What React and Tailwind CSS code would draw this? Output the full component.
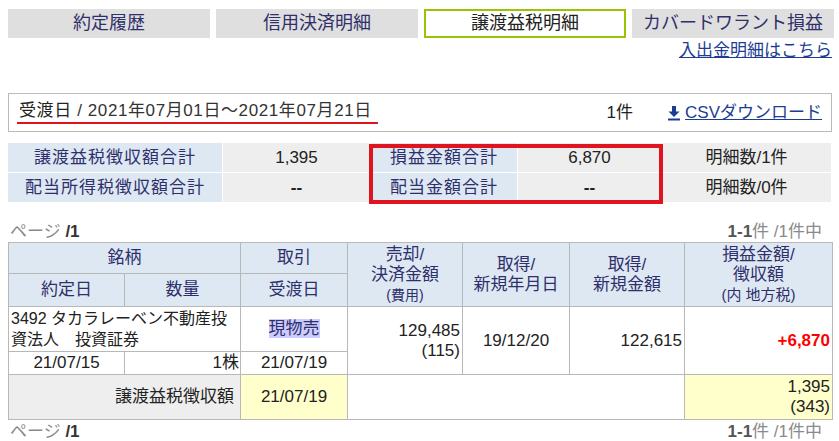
const tabs = [
  { label: '約定履歴' },
  { label: '信用決済明細' },
  { label: '譲渡益税明細', active: true },
  { label: 'カバードワラント損益' },
]

const jp = { fontFamily: '"Liberation Sans", "Noto Sans CJK JP", sans-serif' }

function DownloadIcon() {
  return (
    <svg width="14" height="16" viewBox="0 0 14 16" className="mr-[4px]">
      <rect x="5" y="1" width="4" height="6" fill="#1c3d94" />
      <path d="M1.5 6.5 H12.5 L7 12 Z" fill="#1c3d94" />
      <rect x="1" y="13.5" width="12" height="2" fill="#1c3d94" />
    </svg>
  )
}

function PageRow({ className }) {
  return (
    <div className={`flex justify-between items-center h-[18px] text-[17px] leading-[18px] ${className}`}>
      <span className="text-[#8a8a8a] pl-[2px]">
        ページ <b className="text-[#333] font-bold">/1</b>
      </span>
      <span className="text-[#8a8a8a] pr-[10px]">
        <b className="text-[#555] font-bold">1-1</b>件 /1件中
      </span>
    </div>
  )
}

export default function App() {
  const th = 'border border-[#b8b8b8] bg-[#dde8f3] text-[#2f2f6b] font-normal text-center text-[17px] leading-[20px] p-0'
  const tdBase = 'border border-[#b8b8b8] text-[#222] leading-[20px] p-0'
  const td = `${tdBase} text-[17px]`
  const cell = 'h-[29px] flex items-center justify-center'
  const label = `${cell} bg-[#dde8f3] text-[#2f2f6b] tracking-[1px]`

  return (
    <div className="w-[839px] h-[441px] overflow-hidden bg-white" style={jp}>
      <div className="flex gap-[6px] pl-[8px] pt-[9px] overflow-hidden">
        {tabs.map((t) => (
          <div
            key={t.label}
            className={`w-[202px] h-[29px] shrink-0 flex items-center justify-center text-[18px] ${
              t.active ? 'border-2 border-[#99c400] bg-white text-[#222]' : 'bg-[#dfdfdf] text-[#2f2f6b]'
            }`}
          >
            {t.label}
          </div>
        ))}
      </div>

      <div className="pl-[8px] w-[832px]">
        <div className="text-right h-[24px] pt-[3px] leading-[20px]">
          <a className="text-[17px] text-[#1c3d94] underline">入出金明細はこちら</a>
        </div>

        <div className="mt-[31px] h-[39px] border border-[#bbb] flex items-center justify-between text-[17px] text-[#333] pr-[9px]">
          <span className="ml-[8px] w-[361px] border-b-2 border-[#e0141e] pb-[1px] pl-[2px] leading-[20px] whitespace-nowrap tracking-[0.6px]">
            <span className="text-[#222]">受渡日</span> / 2021年07月01日～2021年07月21日
          </span>
          <div className="flex items-center">
            <span className="text-[#222]">1件</span>
            <a className="ml-[34px] flex items-center text-[#1c3d94] underline">
              <DownloadIcon />
              CSVダウンロード
            </a>
          </div>
        </div>

        <div className="relative mt-[11px]">
          <div className="grid grid-cols-[214px_147px_146px_143px_169px] gap-px text-[17px]">
            <div className={label}>譲渡益税徴収額合計</div>
            <div className={`${cell} bg-[#eeeeee] text-[#222]`}>1,395</div>
            <div className={label}>損益金額合計</div>
            <div className={`${cell} bg-[#eeeeee] text-[#222]`}>6,870</div>
            <div className={`${cell} bg-[#eeeeee] text-[#222]`}>明細数/1件</div>
            <div className={label}>配当所得税徴収額合計</div>
            <div className={`${cell} bg-[#eeeeee] text-[#222] font-bold`}>--</div>
            <div className={label}>配当金額合計</div>
            <div className={`${cell} bg-[#eeeeee] text-[#222] font-bold`}>--</div>
            <div className={`${cell} bg-[#eeeeee] text-[#222]`}>明細数/0件</div>
          </div>
          <div className="absolute left-[361px] top-[1px] w-[294px] h-[60px] border-[4px] border-[#e0141e] pointer-events-none" />
        </div>

        <PageRow className="mt-[21px]" />

        <table className="mt-[1px] w-[824px] table-fixed border-collapse">
          <colgroup>
            <col className="w-[116px]" />
            <col className="w-[116px]" />
            <col className="w-[107px]" />
            <col className="w-[115px]" />
            <col className="w-[107px]" />
            <col className="w-[115px]" />
            <col className="w-[148px]" />
          </colgroup>
          <tbody>
            <tr className="h-[31px]">
              <th colSpan={2} className={th}>銘柄</th>
              <th className={th}>取引</th>
              <th rowSpan={2} className={th}>
                売却/<br />決済金額<br />
                <span className="text-[14px] leading-[14px]">(費用)</span>
              </th>
              <th rowSpan={2} className={th}>取得/<br />新規年月日</th>
              <th rowSpan={2} className={th}>取得/<br />新規金額</th>
              <th rowSpan={2} className={th}>
                損益金額/<br />徴収額<br />
                <span className="text-[15px] leading-[14px]">(内 地方税)</span>
              </th>
            </tr>
            <tr className="h-[33px]">
              <th className={th}>約定日</th>
              <th className={th}>数量</th>
              <th className={th}>受渡日</th>
            </tr>
            <tr className="h-[45px]">
              <td colSpan={2} className={`${tdBase} text-[16px] text-left align-top pl-[2px] leading-[21px] pt-[1px] whitespace-nowrap overflow-hidden`}>
                3492 タカラレーベン不動産投<br />資法人　投資証券
              </td>
              <td className={`${td} text-center`}>
                <span className="bg-[#ccccff] text-[#2f2f6b]">現物売</span>
              </td>
              <td rowSpan={2} className={`${td} text-right pr-[2px]`}>
                129,485<br />(115)
              </td>
              <td rowSpan={2} className={`${td} text-center`}>19/12/20</td>
              <td rowSpan={2} className={`${td} text-right pr-[2px]`}>122,615</td>
              <td rowSpan={2} className={`${td} text-right pr-[2px] text-[#ff0000] font-bold`}>+6,870</td>
            </tr>
            <tr className="h-[23px]">
              <td className={`${td} text-center`}>21/07/15</td>
              <td className={`${td} text-right pr-[1px]`}>1株</td>
              <td className={`${td} text-center`}>21/07/19</td>
            </tr>
            <tr className="h-[45px]">
              <td colSpan={2} className={`${td} bg-[#eeeeee] text-right text-[#2f2f6b] pr-[6px]`}>譲渡益税徴収額</td>
              <td className={`${td} bg-[#ffffcc] text-center`}>21/07/19</td>
              <td colSpan={3} className={td}></td>
              <td className={`${td} bg-[#ffffcc] text-right pr-[2px]`}>
                1,395<br />(343)
              </td>
            </tr>
          </tbody>
        </table>

        <PageRow className="mt-[3px]" />
      </div>
    </div>
  )
}
